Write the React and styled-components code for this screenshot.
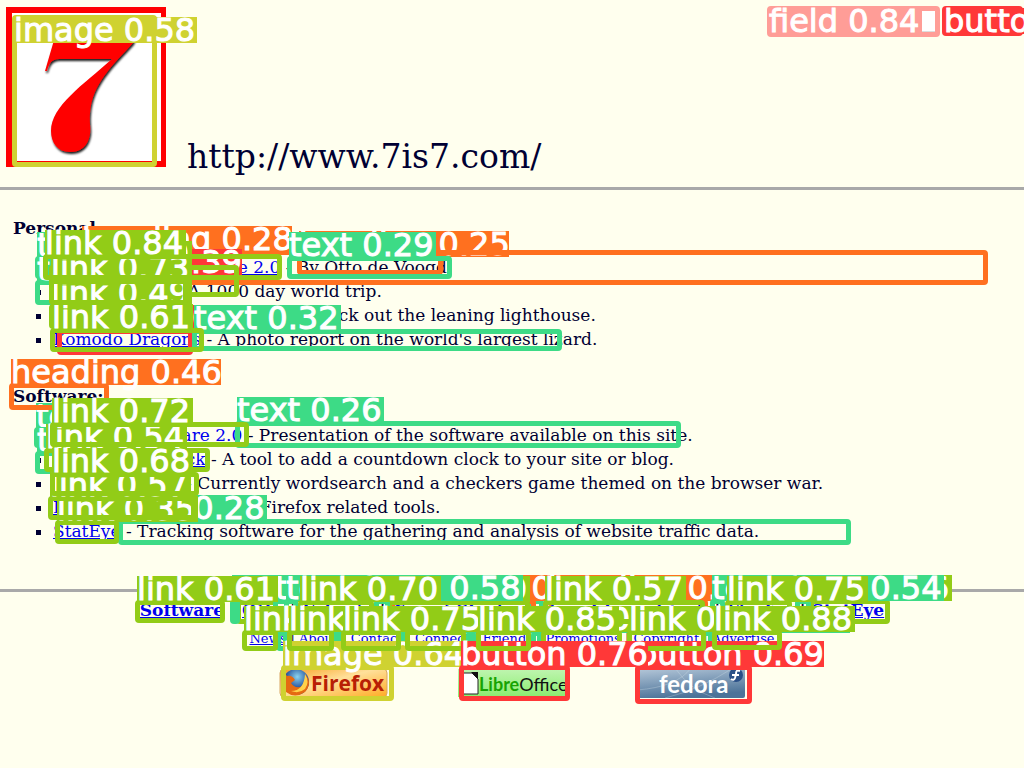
import React from 'react';
import styled, { createGlobalStyle } from 'styled-components';

const GlobalStyle = createGlobalStyle`
  body {
    margin: 0;
    background: #ffffee;
    color: #000033;
    font: 17px/24px "DejaVu Serif", serif;
  }
  a { color: #0000ee; }
`;

const Page = styled.div`
  position: relative;
  overflow: hidden;
  min-height: 100vh;
`;

const Header = styled.header`
  display: flex;
  align-items: flex-start;
  justify-content: space-between;
  padding: 0 0 20px 6px;
  border-bottom: 3px solid #a9a9a9;
`;

const Brand = styled.div`
  display: flex;
  align-items: flex-end;
  gap: 21px;
  padding-top: 7px;
`;

const Logo = styled.svg`
  display: block;
  width: 160px;
  height: 160px;
`;

const Title = styled.h1`
  margin: 0 0 -10px;
  font-size: 33px;
  line-height: 40px;
  font-weight: normal;
`;

const SearchForm = styled.form`
  display: flex;
  gap: 8px;
  padding: 10px 4px 0 0;
`;

const SearchInput = styled.input`
  width: 166px;
  height: 22px;
  box-sizing: border-box;
  border: 1px solid #ddd;
  background: #fff;
`;

const SearchButton = styled.button`
  width: 74px;
  height: 22px;
  padding: 0;
  border: 1px solid #999;
  background: #ddd;
  font-size: 13px;
`;

const Main = styled.main`
  padding: 26px 13px 46px;
`;

const Section = styled.section`
  & + & { margin-top: 33px; }
`;

const SectionTitle = styled.h2`
  margin: 0 0 15px;
  font-size: 17px;
  line-height: 24px;
`;

const Entries = styled.ul`
  margin: 0;
  padding-left: 40px;
  list-style: square;
`;

const Footer = styled.footer`
  border-top: 3px solid #a9a9a9;
  padding-top: 6px;
  display: flex;
  flex-direction: column;
  align-items: center;
`;

const FooterNav = styled.nav`
  font-size: ${(p) => (p.$small ? 13 : 17)}px;
  font-weight: ${(p) => (p.$small ? 'normal' : 'bold')};
  line-height: ${(p) => (p.$small ? 34 : 24)}px;
  white-space: nowrap;
`;

const Badges = styled.div`
  display: flex;
  gap: 68px;
  padding: 12px 0 64px;
`;

const Badge = styled.a`
  display: block;
  svg { display: block; width: 110px; height: 30px; overflow: visible; }
`;

const COLORS = {
  image: '#cfd231',
  link: '#92cc17',
  text: '#3ddb86',
  heading: '#ff701f',
  button: '#ff3838',
  field: '#ff9d97',
};

const LABEL_WIDTHS = { image: 183, link: 141, text: 147, heading: 210, button: 187, field: 153 };

const Overlay = styled.div`
  position: absolute;
  inset: 0;
  overflow: hidden;
  pointer-events: none;
`;

const Outline = styled.div`
  position: absolute;
  left: ${(p) => p.$x - 2}px;
  top: ${(p) => p.$y - 2}px;
  width: ${(p) => p.$w + 4}px;
  height: ${(p) => p.$h + 5}px;
  box-sizing: border-box;
  border: 5px solid ${(p) => COLORS[p.$kind]};
  border-radius: 4px;
`;

const Tag = styled.div`
  position: absolute;
  left: ${(p) => p.$x}px;
  top: ${(p) => (p.$inside ? p.$y : p.$y - 26)}px;
  width: ${(p) => LABEL_WIDTHS[p.$kind]}px;
  height: 26px;
  background: ${(p) => COLORS[p.$kind]};
  color: #fff;
  font: 32px/26px "DejaVu Sans", sans-serif;
  -webkit-text-stroke: 1px #fff;
  white-space: nowrap;
`;

// kind, score, left, top, right, bottom, label inside the box
const DETECTIONS = [
  ['heading', '0.25', 299, 257, 441, 272],
  ['text', '0.25', 37, 258, 180, 276],
  ['text', '0.25', 37, 282, 180, 302],
  ['text', '0.25', 36, 429, 180, 445],
  ['text', '0.25', 37, 453, 180, 471],
  ['text', '0.26', 237, 423, 679, 445],
  ['heading', '0.28', 82, 252, 986, 282],
  ['text', '0.28', 120, 521, 849, 542],
  ['text', '0.29', 289, 258, 450, 276],
  ['button', '0.30', 59, 331, 191, 352],
  ['link', '0.30', 238, 602, 276, 621],
  ['text', '0.30', 530, 601, 542, 621],
  ['heading', '0.30', 392, 601, 534, 621],
  ['heading', '0.31', 548, 601, 706, 621],
  ['text', '0.31', 232, 601, 236, 621],
  ['text', '0.31', 275, 601, 296, 621],
  ['text', '0.31', 286, 601, 296, 621],
  ['text', '0.31', 712, 601, 723, 621],
  ['text', '0.31', 278, 633, 286, 648],
  ['text', '0.31', 334, 633, 340, 648],
  ['text', '0.31', 399, 633, 405, 648],
  ['text', '0.31', 468, 633, 474, 648],
  ['text', '0.31', 533, 633, 540, 648],
  ['text', '0.31', 703, 633, 711, 648],
  ['text', '0.32', 194, 331, 560, 348],
  ['link', '0.35', 57, 522, 117, 541],
  ['link', '0.36', 811, 601, 888, 621],
  ['button', '0.39', 55, 275, 180, 300],
  ['link', '0.40', 51, 267, 237, 294],
  ['heading', '0.46', 11, 385, 107, 407],
  ['link', '0.49', 51, 306, 186, 326],
  ['link', '0.50', 389, 602, 528, 621],
  ['link', '0.50', 543, 632, 620, 648],
  ['link', '0.54', 46, 450, 208, 469],
  ['text', '0.54', 797, 601, 809, 621],
  ['link', '0.57', 50, 498, 194, 517],
  ['link', '0.57', 545, 602, 703, 621],
  ['text', '0.58', 376, 601, 388, 621],
  ['image', '0.58', 14, 17, 155, 164, true],
  ['link', '0.61', 52, 330, 202, 349],
  ['link', '0.61', 137, 602, 223, 620],
  ['image', '0.64', 283, 667, 392, 698],
  ['link', '0.68', 52, 474, 197, 493],
  ['button', '0.69', 637, 667, 750, 701],
  ['link', '0.70', 300, 602, 372, 621],
  ['link', '0.70', 244, 632, 276, 648],
  ['link', '0.71', 289, 632, 332, 648],
  ['link', '0.72', 407, 632, 464, 648],
  ['link', '0.72', 52, 424, 247, 444],
  ['link', '0.73', 51, 281, 186, 302],
  ['link', '0.74', 629, 632, 704, 648],
  ['link', '0.75', 343, 632, 399, 648],
  ['link', '0.75', 727, 602, 790, 621],
  ['button', '0.76', 461, 667, 568, 698],
  ['link', '0.84', 45, 256, 280, 277],
  ['field', '0.84', 769, 8, 938, 34, true],
  ['button', '0.84', 944, 8, 1021, 33, true],
  ['link', '0.85', 478, 632, 529, 648],
  ['link', '0.88', 714, 632, 780, 647],
];

const SECTIONS = [
  {
    title: 'Personal:',
    items: [
      ['Otto Voogd Homepage 2.0', 'By Otto de Voogd'],
      ['Travel Photos', 'A 1000 day world trip.'],
      ['Estonia', 'Pictures of Estonia, check out the leaning lighthouse.'],
      ['Komodo Dragons', "A photo report on the world's largest lizard."],
    ],
  },
  {
    title: 'Software:',
    items: [
      ['The 7is7 Software 2.0', 'Presentation of the software available on this site.'],
      ['Countdown Clock', 'A tool to add a countdown clock to your site or blog.'],
      ['Browser Game', 'Currently wordsearch and a checkers game themed on the browser war.'],
      ['Firefox Add-ons', 'Some Firefox related tools.'],
      ['StatEye', 'Tracking software for the gathering and analysis of website traffic data.'],
    ],
  },
];

const MAIN_LINKS = ['Software', 'Otto', 'Estonia', 'Travel Stories', 'Countdown Clock', 'Firefox', 'StatEye'];
const SITE_LINKS = ['News', 'About', 'Contact', 'Connect', 'Friends', 'Promotions', 'Copyright', 'Advertise'];

const LinkRow = ({ links, small }) => (
  <FooterNav $small={small}>
    {links.map((name, i) => (
      <React.Fragment key={name}>
        {i > 0 && ' | '}
        <a href="#">{name}</a>
      </React.Fragment>
    ))}
  </FooterNav>
);

const SevenLogo = () => (
  <Logo viewBox="6 7 160 160" role="img" aria-label="7is7">
    <defs>
      <filter id="shade" x="-20%" y="-20%" width="140%" height="140%">
        <feDropShadow dx="1" dy="2" stdDeviation="1" floodColor="#000" floodOpacity="0.9" />
      </filter>
    </defs>
    <rect x="6" y="7" width="160" height="160" fill="#f00" />
    <rect x="12" y="13" width="149" height="148" fill="#fff" />
    <path
      filter="url(#shade)"
      fill="#f00"
      d="M45 71 L57 30 H138 L133 43 C112 66 92 84 90 113 C89 121 91 128 90 134 C88 146 81 152 70 152 C58 152 51 143 51 131 C51 106 83 85 112 59 H59 C51 59 49 64 47 71 Z"
    />
  </Logo>
);

const FirefoxBadge = () => (
  <svg viewBox="0 0 110 30" aria-hidden="true">
    <defs>
      <linearGradient id="amber" x1="0" y1="0" x2="1" y2="1">
        <stop offset="0" stopColor="#f9a01f" />
        <stop offset="0.45" stopColor="#ffe09a" />
        <stop offset="1" stopColor="#ffab24" />
      </linearGradient>
      <radialGradient id="globe" cx="0.55" cy="0.3">
        <stop offset="0" stopColor="#8bd3ef" />
        <stop offset="1" stopColor="#173f91" />
      </radialGradient>
    </defs>
    <rect x="1" y="1" width="107" height="28" rx="4" fill="url(#amber)" stroke="#d9a763" />
    <circle cx="17" cy="14" r="13" fill="url(#globe)" />
    <path d="M3 8 Q6 4 8 8 Q13 7 16 12 L12 15 Q15 20 21 19 Q28 17 26 6 Q34 15 26 24 Q16 31 7 24 Q0 19 3 8Z" fill="#e56a12" />
    <path d="M26 6 Q31 14 26 21 Q20 26 12 23 Q25 23 26 6Z" fill="#ffd24a" />
    <text x="32" y="23" fill="#b82005" fontFamily="Open Sans, sans-serif" fontSize="21" fontWeight="bold">Firefox</text>
  </svg>
);

const LibreBadge = () => (
  <svg viewBox="0 0 110 30" aria-hidden="true">
    <defs>
      <linearGradient id="leaf" x1="0" y1="0" x2="0" y2="1">
        <stop offset="0" stopColor="#bff5b0" />
        <stop offset="1" stopColor="#8bed70" />
      </linearGradient>
    </defs>
    <rect x="1" y="1" width="109" height="28" fill="url(#leaf)" />
    <path d="M5 5 H15 L21 11 V26 H5Z" fill="#fff" stroke="#222" />
    <path d="M14 4 H21 V11Z" fill="#111" />
    <text x="22" y="23" fontFamily="Lato, sans-serif" fontSize="18">
      <tspan fill="#18a303" fontWeight="bold">Libre</tspan>
      <tspan fill="#111">Office</tspan>
    </text>
  </svg>
);

const FedoraBadge = () => (
  <svg viewBox="0 0 110 30" aria-hidden="true">
    <defs>
      <linearGradient id="steel" x1="0" y1="0" x2="0.3" y2="1">
        <stop offset="0" stopColor="#b7c9da" />
        <stop offset="1" stopColor="#4c7399" />
      </linearGradient>
    </defs>
    <rect x="2" y="0" width="108" height="30" rx="2" fill="url(#steel)" />
    <path d="M2 22 Q42 19 56 0 M30 30 Q64 22 98 0 M40 0 Q55 22 80 30" fill="none" stroke="#d8e3ec" strokeOpacity="0.3" strokeWidth="1" />
    <circle cx="101" cy="7" r="7" fill="#294f87" />
    <path d="M105 3 Q101 1 101 6 L100 10 Q99 13 96 11 M97 7 H104" fill="none" stroke="#fff" strokeWidth="2" />
    <text x="24" y="25" fill="#fff" fontFamily="Lato, sans-serif" fontSize="24" fontWeight="bold">fedora</text>
  </svg>
);

export default function App() {
  return (
    <Page>
      <GlobalStyle />
      <Header>
        <Brand>
          <SevenLogo />
          <Title>http://www.7is7.com/</Title>
        </Brand>
        <SearchForm onSubmit={(e) => e.preventDefault()}>
          <SearchInput type="text" aria-label="Search" />
          <SearchButton type="submit">Search</SearchButton>
        </SearchForm>
      </Header>
      <Main>
        {SECTIONS.map((section) => (
          <Section key={section.title}>
            <SectionTitle>{section.title}</SectionTitle>
            <Entries>
              {section.items.map(([name, description]) => (
                <li key={name}>
                  <a href="#">{name}</a> - {description}
                </li>
              ))}
            </Entries>
          </Section>
        ))}
      </Main>
      <Footer>
        <LinkRow links={MAIN_LINKS} />
        <LinkRow links={SITE_LINKS} small />
        <Badges>
          <Badge href="#" aria-label="Firefox"><FirefoxBadge /></Badge>
          <Badge href="#" aria-label="LibreOffice"><LibreBadge /></Badge>
          <Badge href="#" aria-label="Fedora"><FedoraBadge /></Badge>
        </Badges>
      </Footer>
      <Overlay>
        {DETECTIONS.map(([kind, score, x1, y1, x2, y2, inside], i) => (
          <React.Fragment key={i}>
            <Outline $kind={kind} $x={x1} $y={y1} $w={x2 - x1} $h={y2 - y1} />
            <Tag $kind={kind} $x={x1} $y={y1} $inside={inside}>{kind} {score}</Tag>
          </React.Fragment>
        ))}
      </Overlay>
    </Page>
  );
}
